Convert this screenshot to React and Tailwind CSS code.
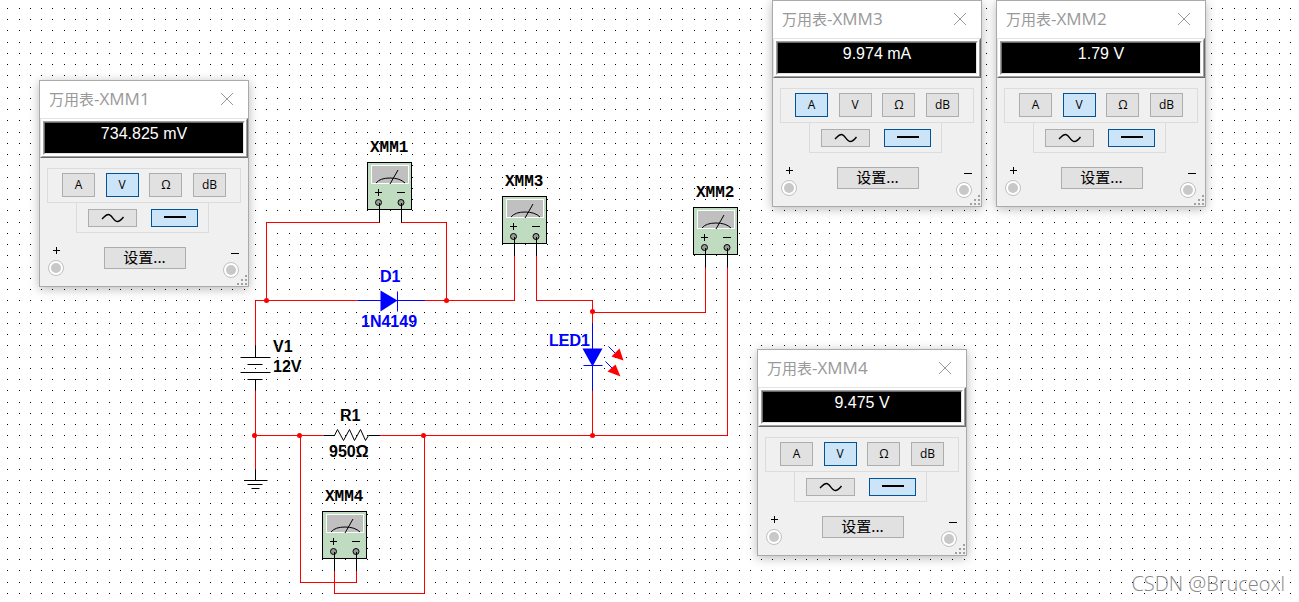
const METERS = [
  { id: 'XMM1', reading: '734.825 mV', mode: 'V', place: 'left-[39px] top-20' },
  { id: 'XMM3', reading: '9.974 mA', mode: 'A', place: 'left-[772px] top-0' },
  { id: 'XMM2', reading: '1.79 V', mode: 'V', place: 'left-[996px] top-0' },
  { id: 'XMM4', reading: '9.475 V', mode: 'V', place: 'left-[757px] top-[349px]' },
]

const MODES = ['A', 'V', 'Ω', 'dB']

function PanelButton({ active, className, children, ...rest }) {
  return (
    <button
      type="button"
      aria-pressed={active}
      className={`flex justify-center border text-black ${
        active ? 'border-[#005499] bg-[#cce4f7]' : 'border-[#adadad] bg-[#e1e1e1]'
      } ${className}`}
      {...rest}
    >
      {children}
    </button>
  )
}

function Terminal({ sign }) {
  return (
    <div className="flex flex-col gap-1">
      <svg
        className={`h-[9px] w-[9px] ${sign === '+' ? 'ml-1' : 'ml-[7px]'}`}
        viewBox="0 0 9 9"
        shapeRendering="crispEdges"
      >
        <path d={sign === '+' ? 'M1 3.5H8M4.5 0V7' : 'M1 4.5H9'} stroke="#000" fill="none" />
      </svg>
      <span className="flex h-4 w-4 items-center justify-center rounded-full border border-[#c0c0c0] bg-white">
        <span className="h-2.5 w-2.5 rounded-full bg-[#c8c8c8]" />
      </span>
    </div>
  )
}

function ResizeGrip() {
  return (
    <svg className="absolute right-0 bottom-0 h-3 w-3" viewBox="0 0 12 12" fill="#a0a0a0" shapeRendering="crispEdges">
      <path d="M9 1h2v2h-2zM5 5h2v2h-2zM9 5h2v2h-2zM1 9h2v2h-2zM5 9h2v2h-2zM9 9h2v2h-2z" />
    </svg>
  )
}

function MeterWindow({ id, reading, mode, place }) {
  return (
    <section className={`absolute w-[210px] border border-[#aaaaaa] bg-[#f0f0f0] shadow-[0_2px_10px_rgba(0,0,0,0.28)] ${place}`}>
      <header className="flex h-[37px] items-center justify-between bg-white pr-3.5 pb-0.5 pl-[9px]">
        <h2 className="font-['Open_Sans','Noto_Sans_CJK_SC',sans-serif] text-[15px] leading-5 text-[#999999]">
          万用表<span className="text-[17px] leading-5">-{id}</span>
        </h2>
        <button type="button" aria-label="关闭">
          <svg className="h-3.5 w-3.5" viewBox="0 0 14 14" fill="none" stroke="#999">
            <path d="M1 1L13 13M13 1L1 13" />
          </svg>
        </button>
      </header>

      {/* raised frame around a sunken display */}
      <div className="border border-t-[#e3e3e3] border-r-[#696969] border-b-[#696969] border-l-[#e3e3e3]">
        <div className="border border-t-white border-r-[#a0a0a0] border-b-[#a0a0a0] border-l-white bg-white p-px">
          <div className="border border-t-[#a0a0a0] border-r-white border-b-white border-l-[#a0a0a0]">
            <output className="block h-8 border border-t-[#696969] border-r-[#e3e3e3] border-b-[#e3e3e3] border-l-[#696969] bg-black text-center font-['Liberation_Sans',sans-serif] text-base leading-[21px] text-white">
              {reading}
            </output>
          </div>
        </div>
      </div>

      <div className="mx-[7px] mt-2.5 flex h-[35px] items-start justify-between border border-[#dcdcdc] px-3.5 pt-1">
        {MODES.map((m) => (
          <PanelButton
            key={m}
            active={m === mode}
            className="h-6 w-[33px] font-['Open_Sans',sans-serif] text-xs leading-[22px]"
          >
            {m}
          </PanelButton>
        ))}
      </div>
      <div className="mr-[39px] ml-9 flex h-[30px] justify-between border border-t-0 border-[#dcdcdc] pt-1.5 pr-2.5 pl-[11px]">
        <PanelButton active={false} aria-label="AC" className="h-[18px] w-[49px] items-center">
          <svg className="h-2.5 w-6" viewBox="0 0 24 10" fill="none" stroke="#000" strokeWidth="1.4">
            <path d="M1 6C4 3 5 1.500 7.500 1.500C11 1.500 12.500 8.500 16.500 8.500C19 8.500 20 7 22.500 4" />
          </svg>
        </PanelButton>
        <PanelButton active aria-label="DC" className="h-[18px] w-[47px] items-center">
          <span className="mb-0.5 h-0.5 w-[22px] bg-black" />
        </PanelButton>
      </div>

      <div className="flex h-[53px] items-start justify-between px-2 pt-3.5">
        <Terminal sign="+" />
        <PanelButton
          active={false}
          className="ml-[18px] h-[22px] w-[82px] font-['Noto_Sans_CJK_SC',sans-serif] text-[15px] leading-[18px]"
        >
          设置...
        </PanelButton>
        <div className="pt-0.5 pr-px pl-4">
          <Terminal sign="-" />
        </div>
      </div>
      <ResizeGrip />
    </section>
  )
}

// Meter symbol on the schematic, x/y is the top left corner of its box
function MeterSymbol({ x, y, label }) {
  return (
    <g transform={`translate(${x} ${y})`} fill="none" stroke="#000">
      <text x="3" y="-10" fill="#000" stroke="none" className="font-['Liberation_Mono',monospace] text-base font-bold">
        {label}
      </text>
      <path d="M12.500 40V60M34.500 40V60" />
      <rect x="0.500" y="0.500" width="44" height="47" fill="#c0dcc0" />
      <rect x="4.500" y="3.500" width="37" height="18" fill="#c0c0c0" stroke="#fff" />
      <path d="M9 21Q13 16 23 16T38 21M23 22L31 8" />
      <path d="M8 30.500H15M11.500 27V34M30 30.500H38" />
      <circle cx="11.500" cy="40.500" r="3" fill="#999" />
      <circle cx="34" cy="40.500" r="3" fill="#999" />
      <path d="M12.500 41V48M34.500 41V48" />
    </g>
  )
}

const JUNCTIONS = [
  [266, 300],
  [446, 300],
  [592, 311],
  [254, 435],
  [299, 435],
  [423, 435],
  [592, 435],
]

const LABELS = [
  { text: 'D1', x: 380, y: 282, color: '#0000ff' },
  { text: '1N4149', x: 361, y: 327, color: '#0000ff' },
  { text: 'LED1', x: 549, y: 346, color: '#0000ff' },
  { text: 'V1', x: 273, y: 352, color: '#000' },
  { text: '12V', x: 273, y: 372, color: '#000' },
  { text: 'R1', x: 340, y: 421, color: '#000' },
  { text: '950Ω', x: 329, y: 457, color: '#000' },
]

function Schematic() {
  return (
    <svg className="absolute inset-0 h-full w-full">
      <defs>
        <pattern id="grid" width="45" height="45" patternUnits="userSpaceOnUse">
          {[8, 19, 30, 42].map((y) =>
            [7, 19, 30, 41].map((x) => <rect key={`${x}-${y}`} x={x} y={y} width="1" height="1" />)
          )}
        </pattern>
      </defs>
      <rect width="100%" height="100%" fill="url(#grid)" />

      <g transform="translate(0.500 0.500)" fill="none">
        {/* wires */}
        <path
          stroke="#ff0000"
          d="M379 222H266V300M401 222H446V300M255 345V300H357M424 300H514V255M536 255V300H592V323M592 312H705V267M727 267V435H379M592 390V435M255 390V469M255 435H323M356 570V582H300V435M334 570V593H424V435"
        />
        {/* battery and ground */}
        <path
          stroke="#000"
          d="M255 345V357M240 357H270M247 364H262M240 372H270M247 379H262M255 379V390M255 469V480M244 480H267M247 484H262M251 488H259"
        />
        {/* resistor */}
        <path stroke="#000" d="M323 435H334L337 429L343 440L349 429L354 440L360 429L365 440L368 435H379" />
        {/* diode */}
        <path stroke="#0000ff" d="M357 300H424M397 291V311" />
        <path fill="#0000ff" d="M380 290L397 300L380 311Z" />
        {/* led */}
        <path stroke="#0000ff" d="M592 323V390M583 365H602M608 346L616 354M605 361L613 369" />
        <path fill="#0000ff" d="M582 348H602L592 366Z" />
        <path fill="#ff0000" d="M619 348L623 360L611 356ZM615 364L620 376L607 371Z" />
      </g>

      {JUNCTIONS.map(([x, y]) => (
        <circle key={`${x}-${y}`} cx={x + 0.5} cy={y + 0.5} r="2.500" fill="#ff0000" />
      ))}

      <MeterSymbol x={367} y={162} label="XMM1" />
      <MeterSymbol x={502} y={196} label="XMM3" />
      <MeterSymbol x={693} y={207} label="XMM2" />
      <MeterSymbol x={322} y={511} label="XMM4" />

      {LABELS.map((l) => (
        <text key={l.text} x={l.x} y={l.y} fill={l.color} className="font-['Liberation_Sans',sans-serif] text-base font-bold">
          {l.text}
        </text>
      ))}
    </svg>
  )
}

export default function App() {
  return (
    <main className="relative min-h-screen overflow-hidden bg-white">
      <Schematic />
      {METERS.map((meter) => (
        <MeterWindow key={meter.id} {...meter} />
      ))}
      <p className="absolute right-3.5 bottom-1 font-['Open_Sans',sans-serif] text-xl leading-7 font-light text-[#888888]">
        CSDN @Bruceoxl
      </p>
    </main>
  )
}
